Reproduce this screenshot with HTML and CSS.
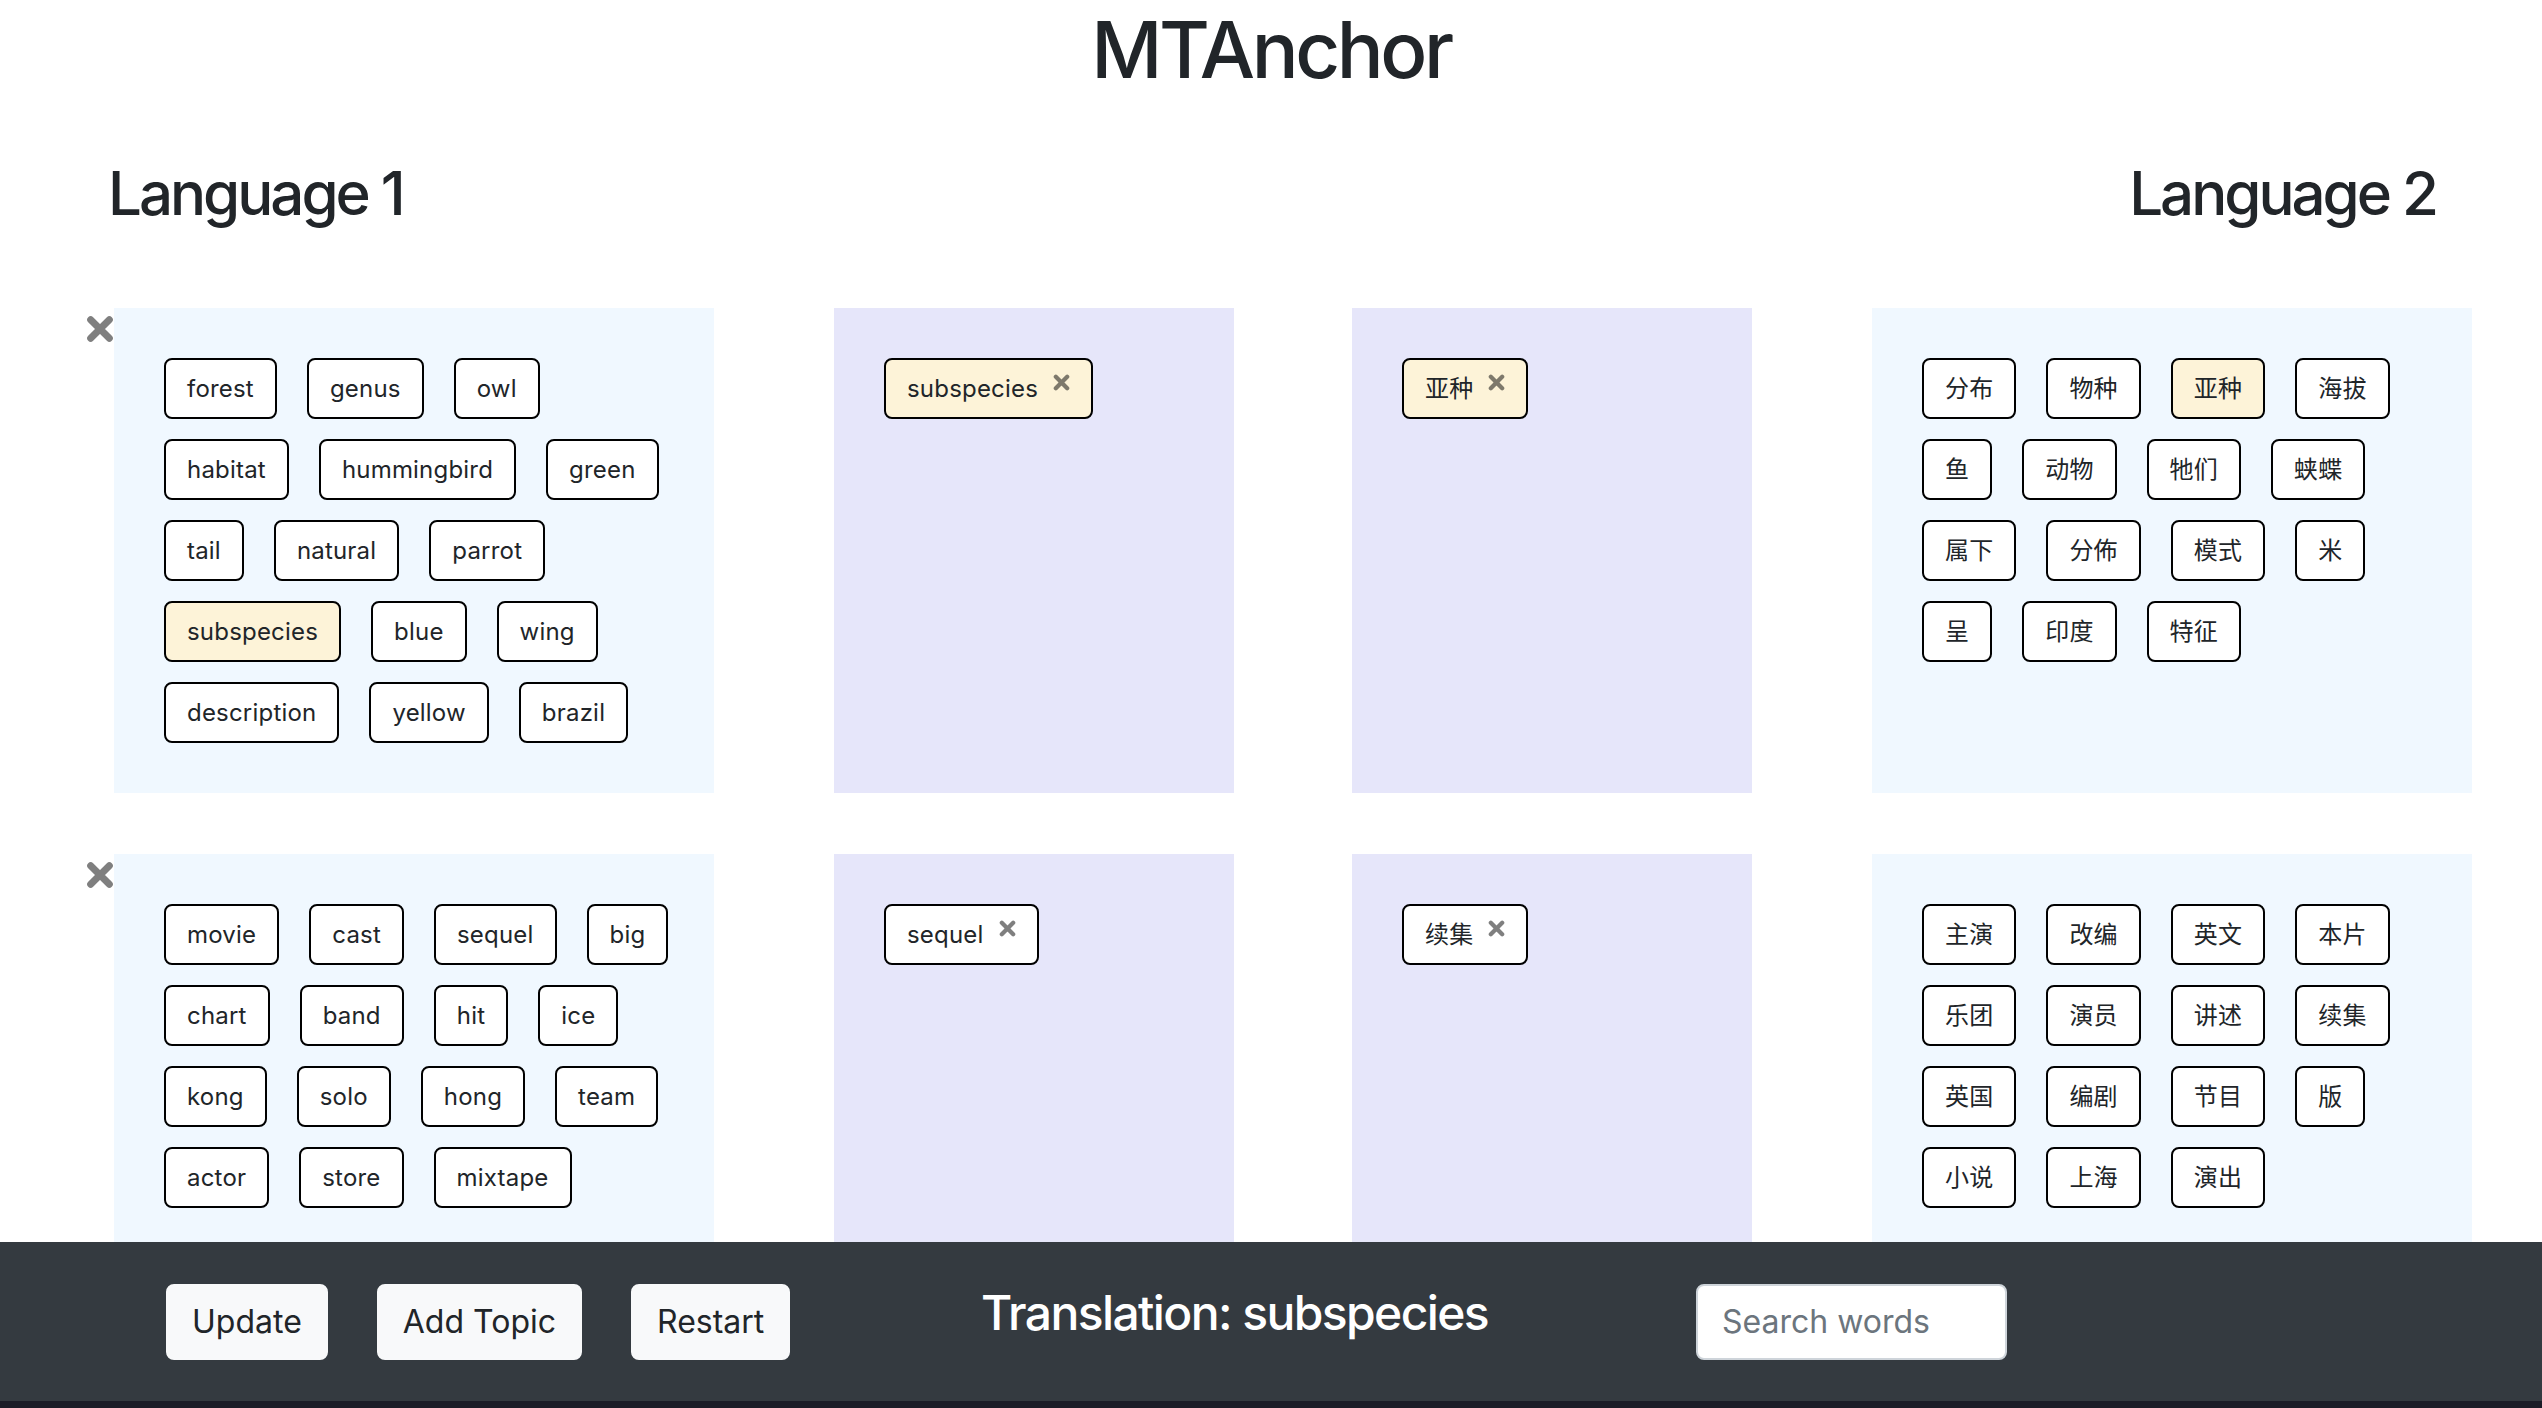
FILE: index.html
```html
<!DOCTYPE html>
<html lang="en">
<head>
    <meta charset="UTF-8">
    <meta name="viewport" content="width=device-width, initial-scale=1.0">
    <title>MTAnchor</title>
    <link rel="stylesheet" href="styles.css">
</head>
<body>
    <h1 class="title">MTAnchor</h1>

    <div class="lang-header">
        <h2>Language 1</h2>
        <h2>Language 2</h2>
    </div>

    <div class="topics">
        <!-- Topic 1 -->
        <div class="topic-row">
            <span class="remove-topic">
                <svg width="28" height="28" viewBox="0 0 24 24"><path d="M4 4L20 20M20 4L4 20" stroke="currentColor" stroke-width="6" stroke-linecap="round"/></svg>
            </span>
            <div class="word-box lang1">
                <div class="tag-row">
                    <span class="tag">forest</span>
                    <span class="tag">genus</span>
                    <span class="tag">owl</span>
                </div>
                <div class="tag-row">
                    <span class="tag">habitat</span>
                    <span class="tag">hummingbird</span>
                    <span class="tag">green</span>
                </div>
                <div class="tag-row">
                    <span class="tag">tail</span>
                    <span class="tag">natural</span>
                    <span class="tag">parrot</span>
                </div>
                <div class="tag-row">
                    <span class="tag selected">subspecies</span>
                    <span class="tag">blue</span>
                    <span class="tag">wing</span>
                </div>
                <div class="tag-row">
                    <span class="tag">description</span>
                    <span class="tag">yellow</span>
                    <span class="tag">brazil</span>
                </div>
            </div>
            <div class="anchor-box">
                <span class="tag selected">subspecies<svg class="tag-x" width="17" height="17" viewBox="0 0 24 24"><path d="M4 4L20 20M20 4L4 20" stroke="currentColor" stroke-width="6" stroke-linecap="round"/></svg></span>
            </div>
            <div class="anchor-box">
                <span class="tag selected">亚种<svg class="tag-x" width="17" height="17" viewBox="0 0 24 24"><path d="M4 4L20 20M20 4L4 20" stroke="currentColor" stroke-width="6" stroke-linecap="round"/></svg></span>
            </div>
            <div class="word-box lang2">
                <div class="tag-row">
                    <span class="tag">分布</span>
                    <span class="tag">物种</span>
                    <span class="tag selected">亚种</span>
                    <span class="tag">海拔</span>
                </div>
                <div class="tag-row">
                    <span class="tag">鱼</span>
                    <span class="tag">动物</span>
                    <span class="tag">牠们</span>
                    <span class="tag">蛱蝶</span>
                </div>
                <div class="tag-row">
                    <span class="tag">属下</span>
                    <span class="tag">分佈</span>
                    <span class="tag">模式</span>
                    <span class="tag">米</span>
                </div>
                <div class="tag-row">
                    <span class="tag">呈</span>
                    <span class="tag">印度</span>
                    <span class="tag">特征</span>
                </div>
            </div>
        </div>

        <!-- Topic 2 -->
        <div class="topic-row">
            <span class="remove-topic">
                <svg width="28" height="28" viewBox="0 0 24 24"><path d="M4 4L20 20M20 4L4 20" stroke="currentColor" stroke-width="6" stroke-linecap="round"/></svg>
            </span>
            <div class="word-box lang1">
                <div class="tag-row">
                    <span class="tag">movie</span>
                    <span class="tag">cast</span>
                    <span class="tag">sequel</span>
                    <span class="tag">big</span>
                </div>
                <div class="tag-row">
                    <span class="tag">chart</span>
                    <span class="tag">band</span>
                    <span class="tag">hit</span>
                    <span class="tag">ice</span>
                </div>
                <div class="tag-row">
                    <span class="tag">kong</span>
                    <span class="tag">solo</span>
                    <span class="tag">hong</span>
                    <span class="tag">team</span>
                </div>
                <div class="tag-row">
                    <span class="tag">actor</span>
                    <span class="tag">store</span>
                    <span class="tag">mixtape</span>
                </div>
            </div>
            <div class="anchor-box">
                <span class="tag">sequel<svg class="tag-x" width="17" height="17" viewBox="0 0 24 24"><path d="M4 4L20 20M20 4L4 20" stroke="currentColor" stroke-width="6" stroke-linecap="round"/></svg></span>
            </div>
            <div class="anchor-box">
                <span class="tag">续集<svg class="tag-x" width="17" height="17" viewBox="0 0 24 24"><path d="M4 4L20 20M20 4L4 20" stroke="currentColor" stroke-width="6" stroke-linecap="round"/></svg></span>
            </div>
            <div class="word-box lang2">
                <div class="tag-row">
                    <span class="tag">主演</span>
                    <span class="tag">改编</span>
                    <span class="tag">英文</span>
                    <span class="tag">本片</span>
                </div>
                <div class="tag-row">
                    <span class="tag">乐团</span>
                    <span class="tag">演员</span>
                    <span class="tag">讲述</span>
                    <span class="tag">续集</span>
                </div>
                <div class="tag-row">
                    <span class="tag">英国</span>
                    <span class="tag">编剧</span>
                    <span class="tag">节目</span>
                    <span class="tag">版</span>
                </div>
                <div class="tag-row">
                    <span class="tag">小说</span>
                    <span class="tag">上海</span>
                    <span class="tag">演出</span>
                </div>
            </div>
        </div>
    </div>

    <footer class="toolbar">
        <div class="toolbar-buttons">
            <button class="btn">Update</button>
            <button class="btn">Add Topic</button>
            <button class="btn">Restart</button>
        </div>
        <h4 class="translation">Translation: subspecies</h4>
        <input class="search" type="text" placeholder="Search words">
    </footer>
</body>
</html>
```

FILE: styles.css
```css
* {
    box-sizing: border-box;
}

body {
    margin: 0;
    font-family: Inter, "Noto Sans CJK SC", sans-serif;
    color: #212529;
    background-color: #fff;
}

.title {
    margin: 0;
    padding-top: 2px;
    font-size: 78px;
    line-height: 96px;
    font-weight: 500;
    letter-spacing: -3.4px;
    text-align: center;
}

.lang-header {
    display: flex;
    justify-content: space-between;
    margin-top: 59px;
    padding: 0 106px 0 108px;
}

.lang-header h2 {
    margin: 0;
    font-size: 60px;
    line-height: 72px;
    font-weight: 500;
    letter-spacing: -3px;
}

.topics {
    display: flex;
    flex-direction: column;
    gap: 61px;
    margin-top: 79px;
    padding-left: 86px;
}

.topic-row {
    display: flex;
    align-items: stretch;
}

.remove-topic {
    width: 28px;
    padding-top: 7px;
    color: rgba(0, 0, 0, 0.5);
}

.remove-topic svg {
    display: block;
}

.word-box {
    width: 600px;
    padding: 50px;
    background-color: aliceblue;
    display: flex;
    flex-direction: column;
    gap: 20px;
}

.word-box.lang1 {
    margin-right: 120px;
}

.anchor-box {
    width: 400px;
    padding: 50px;
    background-color: lavender;
}

.anchor-box + .anchor-box {
    margin-left: 118px;
    margin-right: 120px;
}

.tag-row {
    display: flex;
    gap: 30px;
}

.tag {
    display: inline-block;
    padding: 10px 21px;
    font-size: 24px;
    line-height: 37px;
    letter-spacing: 0.2px;
    background-color: #fff;
    border: 2px solid #000;
    border-radius: 8px;
    white-space: nowrap;
}

.tag.selected {
    background-color: #fdf3d8;
}

.tag-x {
    margin-left: 15px;
    vertical-align: text-top;
    color: rgba(0, 0, 0, 0.5);
}

/* bottom toolbar */
.toolbar {
    position: fixed;
    left: 0;
    right: 0;
    bottom: 0;
    height: 166px;
    display: flex;
    align-items: center;
    padding-left: 166px;
    background-color: #343a40;
    border-bottom: 7px solid #1b1c27;
}

.toolbar-buttons {
    display: flex;
    gap: 49px;
    width: 815px;
}

.btn {
    padding: 12px 24px;
    font-family: Inter, sans-serif;
    font-size: 32px;
    line-height: 48px;
    color: #212529;
    background-color: #f8f9fa;
    border: 2px solid #f8f9fa;
    border-radius: 8px;
}

.translation {
    width: 715px;
    margin: 0 0 18px;
    font-size: 48px;
    line-height: 58px;
    font-weight: 500;
    letter-spacing: -1.6px;
    color: #fff;
}

.search {
    width: 311px;
    height: 76px;
    padding: 12px 24px;
    font-family: Inter, sans-serif;
    font-size: 32px;
    color: #495057;
    background-color: #fff;
    border: 2px solid #ced4da;
    border-radius: 8px;
}

.search::placeholder {
    color: #6c757d;
}
```
